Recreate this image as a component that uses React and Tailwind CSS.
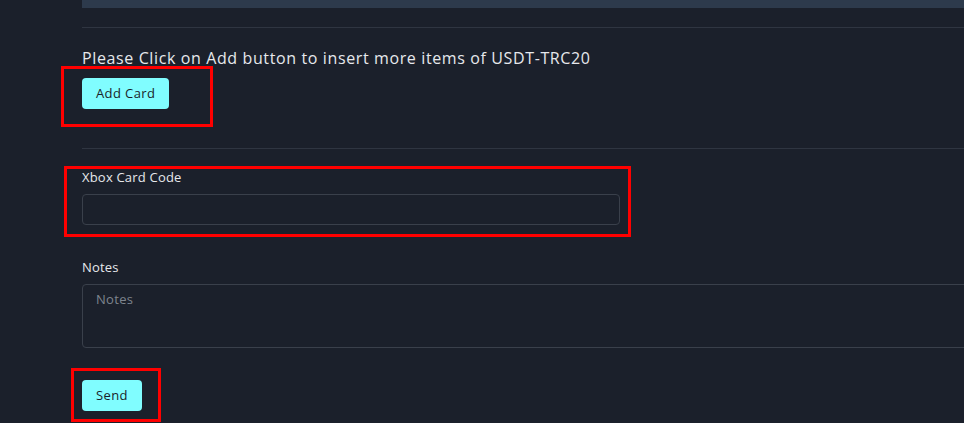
export default function App() {
    return (
        <div className="relative w-[964px] h-[423px] overflow-hidden bg-[#1b202b] font-['Open_Sans',sans-serif] text-[#e6e8ec]">
            <div className="pl-[82px]">
                <div className="h-[8px] bg-[#2d3a4c]"></div>
                <div className="mt-[19px] border-t border-[#2f3541]"></div>
                <div className="pt-[20px] text-[16px] leading-[20px] tracking-[0.62px]">
                    Please Click on Add button to insert more items of USDT-TRC20
                </div>
                <button className="mt-[10px] h-[31px] px-[14px] rounded-[4px] bg-[#80fdff] text-[#1a1f2a] text-[13px] font-medium tracking-[0.4px]">
                    Add Card
                </button>
                <div className="mt-[39px] border-t border-[#2f3541]"></div>
                <div className="pt-[20px] text-[13px] leading-[16px] tracking-[0.2px]">Xbox Card Code</div>
                <div className="mt-[9px] w-[538px] h-[31px] rounded-[4px] border border-[#3a404b]"></div>
                <div className="mt-[34px] text-[13px] leading-[16px] tracking-[0.2px]">Notes</div>
                <div className="mt-[9px] w-[900px] h-[64px] rounded-[4px] border border-[#3a404b] px-[13px] py-[5px] text-[13px] tracking-[0.3px] text-[#7e848e]">
                    Notes
                </div>
                <button className="mt-[32px] h-[31px] px-[14px] rounded-[4px] bg-[#80fdff] text-[#1a1f2a] text-[13px] font-medium tracking-[0.4px]">
                    Send
                </button>
            </div>
            <div className="absolute left-[61px] top-[66px] w-[152px] h-[61px] border-[3px] border-[#ff0000]"></div>
            <div className="absolute left-[64px] top-[166px] w-[567px] h-[71px] border-[3px] border-[#ff0000]"></div>
            <div className="absolute left-[71px] top-[368px] w-[90px] h-[54px] border-[3px] border-[#ff0000]"></div>
        </div>
    );
}
